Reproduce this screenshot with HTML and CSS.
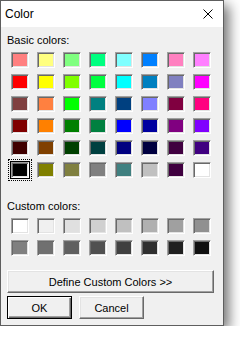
FILE: index.html
```html
<!DOCTYPE html>
<html lang="en">
<head>
    <meta charset="UTF-8">
    <meta name="viewport" content="width=device-width, initial-scale=1.0">
    <title>Color</title>
    <link rel="stylesheet" href="styles.css">
</head>
<body>
    <div class="window">
        <div class="titlebar">
            <span class="title">Color</span>
            <svg class="close" width="10" height="10" viewBox="0 0 10 10">
                <path d="M0.5 0.5 L9.5 9.5 M9.5 0.5 L0.5 9.5" stroke="#000" stroke-width="1" fill="none"/>
            </svg>
        </div>
        <div class="content">
            <div class="label">Basic colors:</div>
            <div class="swatches">
                <span class="swatch" style="background:#ff8080"></span>
                <span class="swatch" style="background:#ffff80"></span>
                <span class="swatch" style="background:#80ff80"></span>
                <span class="swatch" style="background:#00ff80"></span>
                <span class="swatch" style="background:#80ffff"></span>
                <span class="swatch" style="background:#0080ff"></span>
                <span class="swatch" style="background:#ff80c0"></span>
                <span class="swatch" style="background:#ff80ff"></span>

                <span class="swatch" style="background:#ff0000"></span>
                <span class="swatch" style="background:#ffff00"></span>
                <span class="swatch" style="background:#80ff00"></span>
                <span class="swatch" style="background:#00ff40"></span>
                <span class="swatch" style="background:#00ffff"></span>
                <span class="swatch" style="background:#0080c0"></span>
                <span class="swatch" style="background:#8080c0"></span>
                <span class="swatch" style="background:#ff00ff"></span>

                <span class="swatch" style="background:#804040"></span>
                <span class="swatch" style="background:#ff8040"></span>
                <span class="swatch" style="background:#00ff00"></span>
                <span class="swatch" style="background:#008080"></span>
                <span class="swatch" style="background:#004080"></span>
                <span class="swatch" style="background:#8080ff"></span>
                <span class="swatch" style="background:#800040"></span>
                <span class="swatch" style="background:#ff0080"></span>

                <span class="swatch" style="background:#800000"></span>
                <span class="swatch" style="background:#ff8000"></span>
                <span class="swatch" style="background:#008000"></span>
                <span class="swatch" style="background:#008040"></span>
                <span class="swatch" style="background:#0000ff"></span>
                <span class="swatch" style="background:#0000a0"></span>
                <span class="swatch" style="background:#800080"></span>
                <span class="swatch" style="background:#8000ff"></span>

                <span class="swatch" style="background:#400000"></span>
                <span class="swatch" style="background:#804000"></span>
                <span class="swatch" style="background:#004000"></span>
                <span class="swatch" style="background:#004040"></span>
                <span class="swatch" style="background:#000080"></span>
                <span class="swatch" style="background:#000040"></span>
                <span class="swatch" style="background:#400040"></span>
                <span class="swatch" style="background:#400080"></span>

                <span class="swatch selected" style="background:#000000"></span>
                <span class="swatch" style="background:#808000"></span>
                <span class="swatch" style="background:#808040"></span>
                <span class="swatch" style="background:#808080"></span>
                <span class="swatch" style="background:#408080"></span>
                <span class="swatch" style="background:#c0c0c0"></span>
                <span class="swatch" style="background:#400040"></span>
                <span class="swatch" style="background:#ffffff"></span>
            </div>

            <div class="label custom-label">Custom colors:</div>
            <div class="swatches">
                <span class="swatch" style="background:#ffffff"></span>
                <span class="swatch" style="background:#f0f0f0"></span>
                <span class="swatch" style="background:#e0e0e0"></span>
                <span class="swatch" style="background:#d0d0d0"></span>
                <span class="swatch" style="background:#c0c0c0"></span>
                <span class="swatch" style="background:#b0b0b0"></span>
                <span class="swatch" style="background:#a0a0a0"></span>
                <span class="swatch" style="background:#909090"></span>

                <span class="swatch" style="background:#808080"></span>
                <span class="swatch" style="background:#707070"></span>
                <span class="swatch" style="background:#606060"></span>
                <span class="swatch" style="background:#505050"></span>
                <span class="swatch" style="background:#404040"></span>
                <span class="swatch" style="background:#303030"></span>
                <span class="swatch" style="background:#202020"></span>
                <span class="swatch" style="background:#101010"></span>
            </div>

            <button class="btn define">Define Custom Colors &gt;&gt;</button>
            <div class="actions">
                <button class="btn default">OK</button>
                <button class="btn">Cancel</button>
            </div>
        </div>
    </div>
</body>
</html>
```

FILE: styles.css
```css
body {
    margin: 0;
    background: #fff;
    font-family: "Liberation Sans", Arial, sans-serif;
    font-size: 11px;
    color: #000;
}
.window {
    width: 224px;
    box-sizing: border-box;
    border: 1px solid #5e5e5e;
    background: #f0f0f0;
    box-shadow: 5px 5px 12px rgba(0, 0, 0, 0.55);
}
.titlebar {
    height: 26px;
    background: #fff;
    display: flex;
    align-items: center;
    justify-content: space-between;
    padding: 0 10px 0 4px;
}
.title {
    font-size: 12px;
    line-height: 26px;
    padding-bottom: 1px;
}
.close {
    display: block;
    margin-top: -1px;
}
.content {
    padding: 7px 6px 6px 6px;
}
.label {
    line-height: 13px;
}
.custom-label {
    margin-top: 22px;
}
.swatches {
    display: grid;
    grid-template-columns: repeat(8, 18px);
    grid-auto-rows: 16px;
    column-gap: 8px;
    row-gap: 6px;
    margin: 5px 0 0 4px;
}
.swatch {
    display: block;
    box-sizing: border-box;
    border: 1px solid;
    border-color: #a0a0a0 #fff #fff #a0a0a0;
    box-shadow: inset 1px 1px #696969, inset -1px -1px #e3e3e3;
}
.swatch.selected {
    outline: 1px dotted #000;
    outline-offset: 2px;
    box-shadow: 0 0 0 1px #000, inset 1px 1px #696969, inset -1px -1px #e3e3e3;
}
.btn {
    display: block;
    box-sizing: border-box;
    height: 23px;
    padding: 0;
    font-family: "Liberation Sans", Arial, sans-serif;
    font-size: 11px;
    color: #000;
    background: #f0f0f0;
    border: 1px solid;
    border-color: #fff #696969 #696969 #fff;
    box-shadow: inset -1px -1px #a0a0a0, inset 1px 1px #e3e3e3;
}
.define {
    width: 207px;
    margin-top: 14px;
}
.actions {
    display: flex;
    gap: 7px;
    margin-top: 3px;
}
.actions .btn {
    width: 65px;
}
.btn.default {
    border: 1px solid #000;
    box-shadow: inset 1px 1px #fff, inset -1px -1px #696969, inset -2px -2px #a0a0a0;
}
```
